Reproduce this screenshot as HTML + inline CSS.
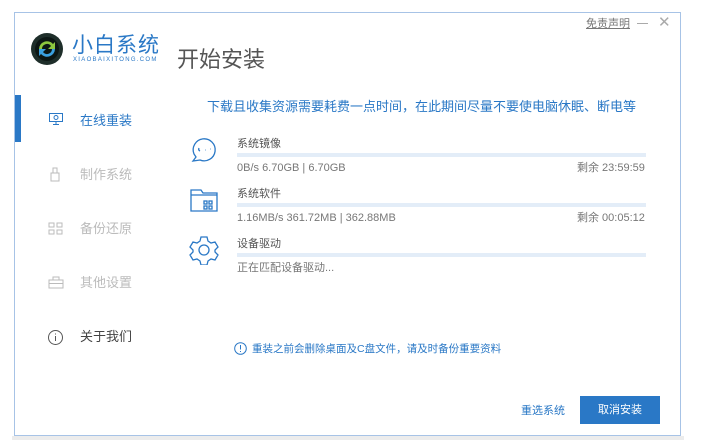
<!DOCTYPE html>
<html><head><meta charset="utf-8"><style>
*{margin:0;padding:0;box-sizing:border-box}
body{width:702px;height:440px;background:#fff;position:relative;overflow:hidden;font-family:"Liberation Sans","Noto Sans CJK SC",sans-serif}
.win{position:absolute;left:14px;top:12px;width:667px;height:424px;border:1px solid #a7c3e6;background:#fff}
.shade{position:absolute;left:12px;top:436px;width:672px;height:4px;background:#ececec}
.a{position:absolute;white-space:nowrap;line-height:1.25}
.nav{position:absolute;left:80px;font-size:13px;color:#bbb;line-height:1.25}
.bar{position:absolute;left:237px;width:409px;height:4px;background:#e3edf8}
.g{color:#777;font-size:11px}
</style></head><body>
<div class="shade"></div>
<div class="win"></div>
<svg class="a" style="left:30px;top:32px" width="34" height="34" viewBox="0 0 34 34">
<circle cx="17" cy="17" r="16" fill="#1e2e2a"/>
<circle cx="17" cy="17" r="12" fill="#0c1614"/>
<path d="M9 17a8 8 0 0 1 14-5l2-2v7h-7l3-3a5 5 0 0 0-9 3z" fill="#8cc63f"/>
<path d="M25 17a8 8 0 0 1-14 5l-2 2v-7h7l-3 3a5 5 0 0 0 9-3z" fill="#3aa0e0"/>
</svg>
<div class="a" style="left:72px;top:33px;font-size:21px;color:#2a78c6;letter-spacing:1px">小白系统</div>
<div class="a" style="left:73px;top:57px;font-size:6px;color:#2a78c6;letter-spacing:1.3px">XIAOBAIXITONG.COM</div>
<div class="a" style="left:177px;top:46px;font-size:22px;color:#555">开始安装</div>
<div class="a" style="left:586px;top:18px;font-size:11px;color:#777;text-decoration:underline">免责声明</div>
<div class="a" style="left:637px;top:23px;width:11px;height:1px;background:#aaa"></div>
<div class="a" style="left:658px;top:14px;font-size:15px;color:#aaa">✕</div>
<div class="a" style="left:15px;top:95px;width:6px;height:47px;background:#2a78c6"></div>
<svg class="a" style="left:48px;top:112px" width="16" height="14" viewBox="0 0 16 14" fill="none" stroke="#2a78c6"><rect x="1.5" y="1.5" width="13" height="8"/><circle cx="8" cy="5.5" r="2"/><path d="M8 9.5v3M5 12.5h6"/></svg>
<div class="nav" style="top:113px;color:#2a78c6">在线重装</div>
<svg class="a" style="left:50px;top:167px" width="10" height="15" viewBox="0 0 10 15" fill="none" stroke="#bbb"><rect x="1" y="6" width="8" height="8"/><rect x="3" y="1" width="4" height="5"/></svg>
<div class="nav" style="top:167px">制作系统</div>
<svg class="a" style="left:48px;top:222px" width="16" height="13" viewBox="0 0 16 13" fill="none" stroke="#bbb"><rect x="1" y="1" width="5" height="4"/><rect x="9" y="1" width="5" height="4"/><rect x="1" y="8" width="5" height="4"/><rect x="9" y="8" width="5" height="4"/></svg>
<div class="nav" style="top:221px">备份还原</div>
<svg class="a" style="left:48px;top:276px" width="16" height="13" viewBox="0 0 16 13" fill="none" stroke="#bbb"><rect x="1" y="4" width="14" height="8"/><path d="M5 4V1h6v3M1 7.5h14"/></svg>
<div class="nav" style="top:275px">其他设置</div>
<svg class="a" style="left:47px;top:329px" width="17" height="17" viewBox="0 0 17 17" fill="none" stroke="#555"><circle cx="8.5" cy="8.5" r="7"/><path d="M8.5 7v5M8.5 4.5v1"/></svg>
<div class="nav" style="top:329px;color:#444">关于我们</div>
<div class="a" style="left:207px;top:99px;font-size:13px;color:#2a78c6">下载且收集资源需要耗费一点时间，在此期间尽量不要使电脑休眠、断电等</div>
<svg class="a" style="left:188px;top:134px" width="30" height="30" viewBox="0 0 30 30" fill="none" stroke="#2a78c6" stroke-width="1.3"><path d="M6 20a11 11 0 1 1 6 6l-7 1 3-4z"/><path d="M11 14q-1 2 1 3M17 16h.5M22 15h.5"/></svg>
<div class="a" style="left:237px;top:138px;font-size:11px;color:#555">系统镜像</div>
<div class="bar" style="top:153px"></div>
<div class="a g" style="left:237px;top:162px">0B/s 6.70GB | 6.70GB</div>
<div class="a g" style="left:577px;top:162px">剩余 23:59:59</div>
<svg class="a" style="left:189px;top:187px" width="30" height="26" viewBox="0 0 30 26" fill="none" stroke="#2a78c6" stroke-width="1.3"><path d="M2 3h10l2 3h14v18H2z"/><path d="M2 8h26"/><rect x="15" y="14" width="3" height="3"/><rect x="20" y="14" width="3" height="3"/><rect x="15" y="19" width="3" height="3"/><rect x="20" y="19" width="3" height="3"/></svg>
<div class="a" style="left:237px;top:188px;font-size:11px;color:#555">系统软件</div>
<div class="bar" style="top:203px"></div>
<div class="a g" style="left:237px;top:212px">1.16MB/s 361.72MB | 362.88MB</div>
<div class="a g" style="left:577px;top:212px">剩余 00:05:12</div>
<svg class="a" style="left:189px;top:235px" width="30" height="30" viewBox="0 0 30 30" fill="none" stroke="#2a78c6" stroke-width="1.3"><path d="M12 2h6l1 4 3 2 4-1 3 5-3 3v2l3 3-3 5-4-1-3 2-1 4h-6l-1-4-3-2-4 1-3-5 3-3v-2l-3-3 3-5 4 1 3-2z"/><circle cx="15" cy="15" r="5"/></svg>
<div class="a" style="left:237px;top:238px;font-size:11px;color:#555">设备驱动</div>
<div class="bar" style="top:253px"></div>
<div class="a g" style="left:237px;top:262px">正在匹配设备驱动...</div>
<svg class="a" style="left:234px;top:342px" width="13" height="13" viewBox="0 0 13 13" fill="none" stroke="#2a78c6"><circle cx="6.5" cy="6.5" r="5.8"/><path d="M6.5 3v4.5M6.5 9v1"/></svg>
<div class="a" style="left:252px;top:343px;font-size:10.5px;color:#2a78c6">重装之前会删除桌面及C盘文件，请及时备份重要资料</div>
<div class="a" style="left:521px;top:405px;font-size:11px;color:#2a78c6">重选系统</div>
<div class="a" style="left:580px;top:396px;width:80px;height:28px;background:#2a78c6;color:#fff;font-size:11px;text-align:center;line-height:28px">取消安装</div>
</body></html>
